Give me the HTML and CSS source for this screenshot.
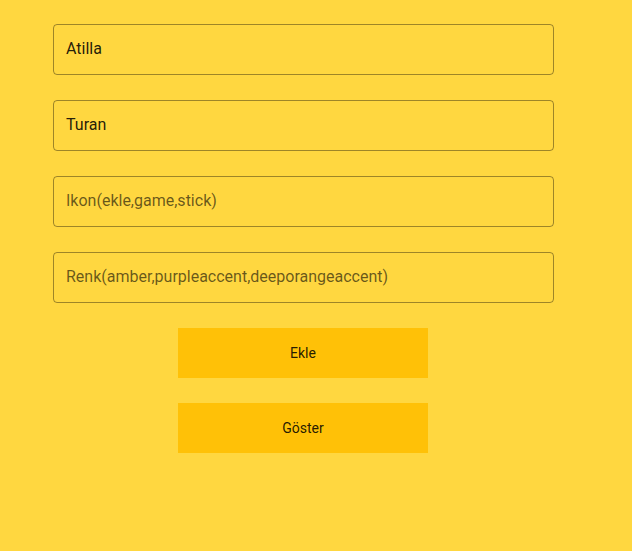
FILE: index.html
```html
<!DOCTYPE html>
<html>
<head>
<meta charset="utf-8">
<link rel="stylesheet" href="styles.css">
</head>
<body>
<div class="page">
  <div class="field"><span class="value">Atilla</span></div>
  <div class="field"><span class="value">Turan</span></div>
  <div class="field"><span class="hint">Ikon(ekle,game,stick)</span></div>
  <div class="field"><span class="hint">Renk(amber,purpleaccent,deeporangeaccent)</span></div>
  <div class="buttons">
    <div class="btn">Ekle</div>
    <div class="btn">Göster</div>
  </div>
</div>
</body>
</html>
```
FILE: styles.css
```css
html, body {
  margin: 0;
  padding: 0;
  background: #FFD740;
  font-family: Roboto, "Noto Sans", sans-serif;
}
.page {
  width: 632px;
  height: 551px;
  padding: 24px 0 0 53px;
  box-sizing: border-box;
  display: flex;
  flex-direction: column;
  gap: 25px;
}
.field {
  width: 501px;
  height: 51px;
  box-sizing: border-box;
  border: 1px solid rgba(0,0,0,0.38);
  border-radius: 4px;
  padding: 0 12px 3px;
  display: flex;
  align-items: center;
  font-size: 16px;
}
.value { color: rgba(0,0,0,0.87); }
.hint { color: rgba(0,0,0,0.6); }
.buttons {
  display: flex;
  flex-direction: column;
  gap: 25px;
  padding-left: 125px;
}
.btn {
  width: 250px;
  height: 50px;
  background: #FFC107;
  display: flex;
  align-items: center;
  justify-content: center;
  font-size: 14px;
  color: rgba(0,0,0,0.87);
}
```
